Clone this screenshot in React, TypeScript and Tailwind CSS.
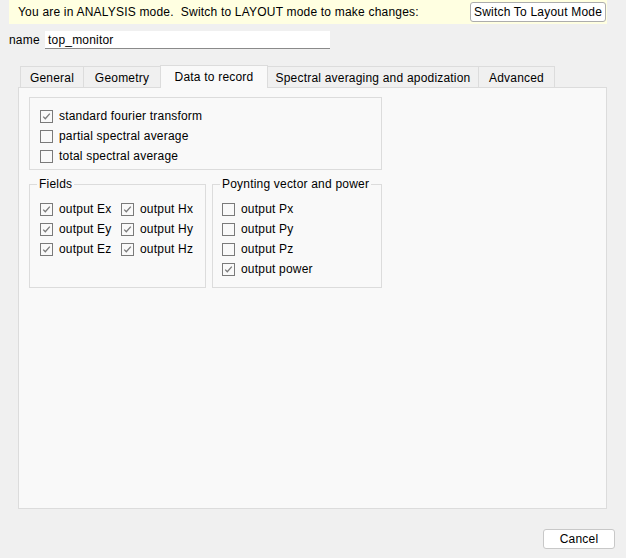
import React from 'react'

const Box = ({ checked, label }: { checked?: boolean; label: string }) => (
  <div className="flex items-center h-[20px]">
    <span className="w-[13px] h-[13px] border border-[#7a7a7a] bg-[#f9f9f9] flex items-center justify-center">
      {checked && (
        <svg width="11" height="11" viewBox="0 0 11 11">
          <path d="M2.2 5.6 L4.3 7.8 L8.8 2.6" fill="none" stroke="#7a7a7a" strokeWidth="1.3" />
        </svg>
      )}
    </span>
    <span className="ml-[6px] whitespace-nowrap">{label}</span>
  </div>
)

const Group = ({
  title,
  className,
  children,
}: {
  title?: string
  className: string
  children: React.ReactNode
}) => (
  <div className={`relative border border-[#dcdcdc] ${className}`}>
    {title && (
      <span className="absolute left-[7px] -top-[9px] px-[2px] bg-[#f9f9f9] leading-[16px]">
        {title}
      </span>
    )}
    {children}
  </div>
)

const tabs = [
  { t: 'General', w: 'w-[64px]' },
  { t: 'Geometry', w: 'w-[78px]' },
  { t: 'Data to record', w: 'w-[108px]' },
  { t: 'Spectral averaging and apodization', w: 'w-[212px]' },
  { t: 'Advanced', w: 'w-[77px]' },
]

export default function App() {
  return (
    <div
      className="w-[626px] h-[558px] bg-[#f0f0f0] flex flex-col text-[12px] tracking-[0.2px] text-black overflow-hidden"
      style={{ fontFamily: '"Liberation Sans", Arial, sans-serif' }}
    >
      <div className="ml-[9px] w-[598px] h-[24px] bg-[#ffffe1] flex items-center pl-[9px] pr-[1px]">
        <span className="flex-1 whitespace-pre">You are in ANALYSIS mode.  Switch to LAYOUT mode to make changes:</span>
        <button className="h-[20px] w-[136px] border border-[#adadad] rounded-[3px] bg-white text-[12px] tracking-[0.2px]">
          Switch To Layout Mode
        </button>
      </div>

      <div className="flex items-center mt-[7px] h-[18px]">
        <span className="ml-[9px] w-[36px]">name</span>
        <div className="w-[285px] h-[18px] bg-white border-b border-[#8a8a8a] pl-[3px] leading-[18px]">
          top_monitor
        </div>
      </div>

      <div className="flex items-end ml-[20px] mt-[15px] h-[23px]">
        {tabs.map(({ t, w }, i) =>
          i === 2 ? (
            <div
              key={t}
              className={`${w} -ml-px h-[23px] bg-[#f9f9f9] border border-b-0 border-[#dcdcdc] -mb-px relative z-10 flex items-center justify-center`}
            >
              {t}
            </div>
          ) : (
            <div
              key={t}
              className={`${w} -ml-px first:ml-0 h-[21px] bg-[#f0f0f0] border border-b-0 border-[#dcdcdc] flex items-center justify-center pt-[2px]`}
            >
              {t}
            </div>
          )
        )}
      </div>

      <div className="ml-[18px] w-[589px] h-[422px] bg-[#f9f9f9] border border-[#dcdcdc] pt-[9px] pl-[10px]">
        <Group className="w-[353px] h-[73px] pt-[8px] pl-[10px]">
          <Box checked label="standard fourier transform" />
          <Box label="partial spectral average" />
          <Box label="total spectral average" />
        </Group>

        <div className="flex mt-[14px] gap-[6px]">
          <Group title="Fields" className="w-[177px] h-[104px] pt-[14px] pl-[10px]">
            <div className="flex">
              <div className="w-[81px]">
                <Box checked label="output Ex" />
                <Box checked label="output Ey" />
                <Box checked label="output Ez" />
              </div>
              <div>
                <Box checked label="output Hx" />
                <Box checked label="output Hy" />
                <Box checked label="output Hz" />
              </div>
            </div>
          </Group>
          <Group title="Poynting vector and power" className="w-[170px] h-[104px] pt-[14px] pl-[9px]">
            <Box label="output Px" />
            <Box label="output Py" />
            <Box label="output Pz" />
            <Box checked label="output power" />
          </Group>
        </div>
      </div>

      <div className="flex justify-end mt-[20px] pr-[11px]">
        <button className="w-[72px] h-[20px] border border-[#c8c8c8] rounded-[3px] bg-white text-[12px] tracking-[0.2px]">
          Cancel
        </button>
      </div>
    </div>
  )
}
